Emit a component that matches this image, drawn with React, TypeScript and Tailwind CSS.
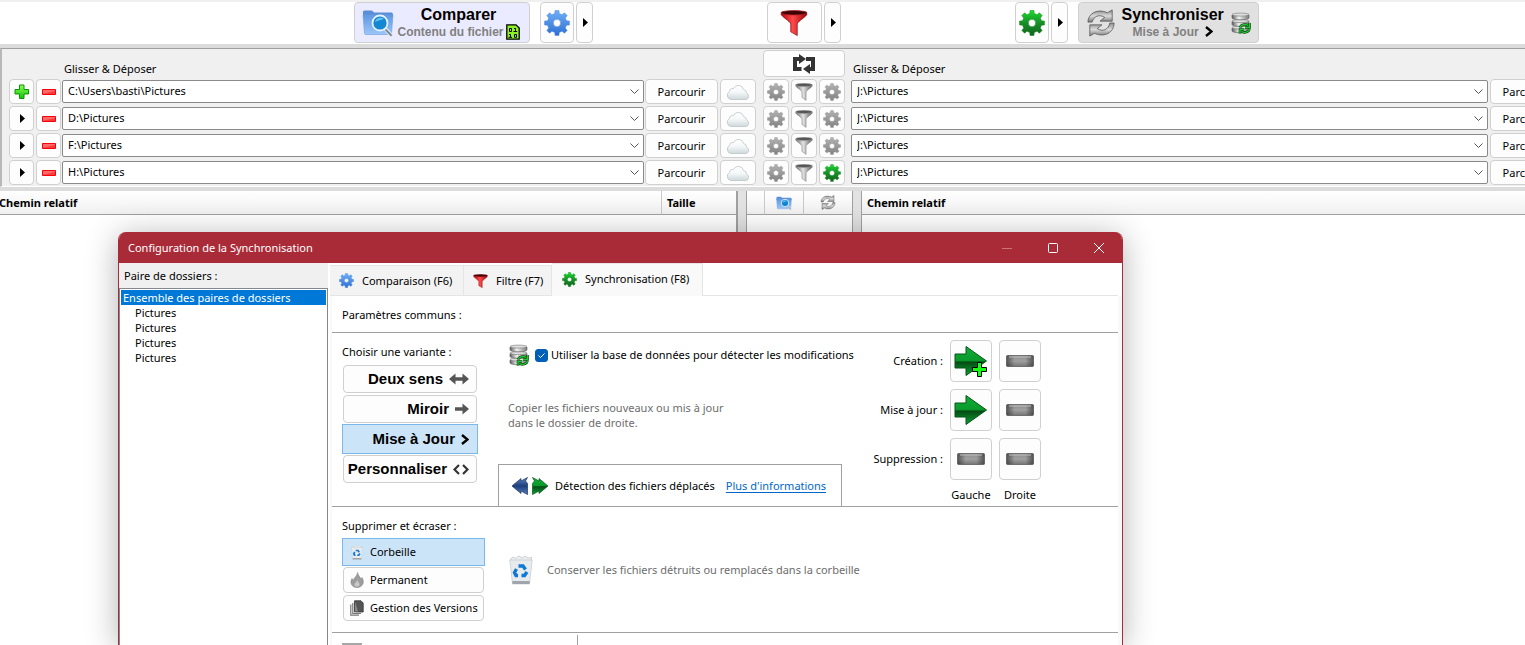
import type { ReactNode } from "react";

function gearPath(teeth: number, outer: number, inner: number, hole: number) {
  const step = (Math.PI * 2) / teeth;
  const at = (r: number, a: number) =>
    `${(16 + r * Math.sin(a)).toFixed(2)} ${(16 - r * Math.cos(a)).toFixed(2)}`;
  const points: string[] = [];
  for (let i = 0; i < teeth; i++) {
    const a = i * step;
    points.push(
      at(inner, a - step * 0.3),
      at(outer, a - step * 0.2),
      at(outer, a + step * 0.2),
      at(inner, a + step * 0.3),
    );
  }
  return `M${points.join("L")}Z M${16 - hole} 16a${hole} ${hole} 0 1 0 ${hole * 2} 0a${hole} ${hole} 0 1 0 ${-hole * 2} 0Z`;
}

const GEAR = gearPath(8, 15.5, 12, 4.5);

function Defs() {
  const v = { x1: "0", y1: "0", x2: "0", y2: "1" };
  const h = { x1: "0", y1: "0", x2: "1", y2: "0" };
  return (
    <svg className="absolute size-0" aria-hidden="true">
      <defs>
        <linearGradient id="blue" {...v}><stop offset="0" stopColor="#6fb0f8" /><stop offset="1" stopColor="#2e6fd2" /></linearGradient>
        <linearGradient id="green" {...v}><stop offset="0" stopColor="#18dd2c" /><stop offset=".5" stopColor="#178f26" /><stop offset="1" stopColor="#12641b" /></linearGradient>
        <linearGradient id="gray" {...v}><stop offset="0" stopColor="#b2b2b2" /><stop offset="1" stopColor="#828282" /></linearGradient>
        <linearGradient id="red" {...h}><stop offset="0" stopColor="#b80410" /><stop offset=".45" stopColor="#ff4a4a" /><stop offset="1" stopColor="#9c020a" /></linearGradient>
        <linearGradient id="steel" {...h}><stop offset="0" stopColor="#6e6e6e" /><stop offset=".45" stopColor="#e2e2e2" /><stop offset="1" stopColor="#5c5c5c" /></linearGradient>
        <linearGradient id="folder" {...v}><stop offset="0" stopColor="#5f98e4" /><stop offset="1" stopColor="#9cc6f8" /></linearGradient>
        <linearGradient id="cloud" {...v}><stop offset="0" stopColor="#ffffff" /><stop offset=".5" stopColor="#f4f7f8" /><stop offset="1" stopColor="#cfd8da" /></linearGradient>
        <linearGradient id="arrow" {...v}><stop offset="0" stopColor="#0fae35" /><stop offset=".48" stopColor="#0a9a2c" /><stop offset=".54" stopColor="#044d14" /><stop offset="1" stopColor="#0da233" /></linearGradient>
        <linearGradient id="navy" {...v}><stop offset="0" stopColor="#6188c4" /><stop offset=".5" stopColor="#1d3f7c" /><stop offset="1" stopColor="#5480c0" /></linearGradient>
        <linearGradient id="bar" {...v}><stop offset="0" stopColor="#8a8a8a" /><stop offset=".5" stopColor="#a0a0a0" /><stop offset="1" stopColor="#757575" /></linearGradient>
        <linearGradient id="barEdge" {...h}><stop offset="0" stopColor="#333" stopOpacity=".7" /><stop offset=".3" stopColor="#333" stopOpacity="0" /><stop offset=".7" stopColor="#333" stopOpacity="0" /><stop offset="1" stopColor="#333" stopOpacity=".7" /></linearGradient>
        <linearGradient id="drum" {...h}><stop offset="0" stopColor="#5a5a5a" /><stop offset=".4" stopColor="#f2f2f2" /><stop offset="1" stopColor="#7a7a7a" /></linearGradient>
        <linearGradient id="sync" {...v}><stop offset="0" stopColor="#8a8a8a" /><stop offset=".5" stopColor="#dadada" /><stop offset="1" stopColor="#7a7a7a" /></linearGradient>
        <linearGradient id="plus" {...v}><stop offset="0" stopColor="#8aff5a" /><stop offset="1" stopColor="#0fc400" /></linearGradient>
      </defs>
    </svg>
  );
}

type IconProps = { className: string };

const BlueGear = ({ className }: IconProps) => (
  <svg viewBox="0 0 32 32" className={`shrink-0 ${className}`} aria-hidden="true"><path d={GEAR} fill="url(#blue)" fillRule="evenodd" stroke="#4a86d6" strokeWidth="0.6" strokeLinejoin="round" /></svg>
);
const GreenGear = ({ className }: IconProps) => (
  <svg viewBox="0 0 32 32" className={`shrink-0 ${className}`} aria-hidden="true"><path d={GEAR} fill="url(#green)" fillRule="evenodd" stroke="#15801f" strokeWidth="0.6" strokeLinejoin="round" /></svg>
);
const GrayGear = ({ className }: IconProps) => (
  <svg viewBox="0 0 32 32" className={`shrink-0 ${className}`} aria-hidden="true"><path d={GEAR} fill="url(#gray)" fillRule="evenodd" stroke="#8a8a8a" strokeWidth="0.6" strokeLinejoin="round" /></svg>
);

const RedFunnel = ({ className }: IconProps) => (
  <svg viewBox="0 0 30 28" className={`shrink-0 ${className}`} aria-hidden="true">
    <path d="M1 4C1 7 11 12 11.500 15V23.500L18.500 27.500V15C19 12 29 7 29 4Z" fill="url(#red)" stroke="#7c0a10" strokeWidth=".7" />
    <ellipse cx="15" cy="3" rx="14" ry="2.300" fill="#3c0306" stroke="#a31a20" strokeWidth=".8" />
  </svg>
);
const GrayFunnel = ({ className }: IconProps) => (
  <svg viewBox="0 0 30 30" className={`shrink-0 ${className}`} aria-hidden="true">
    <path d="M1 4C1 7 11 12 11.500 15V24L18.500 29V15C19 12 29 7 29 4Z" fill="url(#steel)" stroke="#6a6a6a" strokeWidth=".7" />
    <ellipse cx="15" cy="3.200" rx="14" ry="2.600" fill="#555" stroke="#999" strokeWidth=".8" />
  </svg>
);

const FolderSearch = ({ className }: IconProps) => (
  <svg viewBox="0 0 32 28" className={`shrink-0 ${className}`} aria-hidden="true">
    <path d="M1 4V2.500L2 1.500H10L12 3.500H30L31 5V8H1Z" fill="#5a8fd8" />
    <path d="M1 6H31L29.500 24.500Q29.400 25.500 28 25.500H4Q2.600 25.500 2.500 24.500Z" fill="url(#folder)" stroke="#6a9ee4" strokeWidth=".6" />
    <path d="M22.500 19L29 26" stroke="#dfe6ee" strokeWidth="4" strokeLinecap="round" />
    <path d="M24 21L29 26.200" stroke="#73808f" strokeWidth="1.800" strokeLinecap="round" />
    <circle cx="18" cy="14" r="7.500" fill="#1387d3" stroke="#e6f1fb" strokeWidth="1.800" />
    <path d="M13 13A5.500 5.500 0 0 1 22 10Q18 11 13 13Z" fill="#62c1f2" />
  </svg>
);

const SyncArrows = ({ className }: IconProps) => (
  <svg viewBox="0 0 32 30" className={`shrink-0 ${className}`} aria-hidden="true">
    <path d="M2 14C2 5 12-1 23 4L28 1V13H15L20 9C14 5 8 8 6.500 14Z" fill="url(#sync)" stroke="#5c5c5c" strokeWidth=".9" strokeLinejoin="round" />
    <path d="M30 15C30 25 20 31 9 26L4 29V17H17L12 21C18 25 24 22 25.500 15Z" fill="url(#sync)" stroke="#5c5c5c" strokeWidth=".9" strokeLinejoin="round" />
  </svg>
);

const Database = ({ className }: IconProps) => (
  <svg viewBox="0 0 20 22" className={`shrink-0 ${className}`} aria-hidden="true">
    {[15, 8.500, 2].map((y) => (
      <g key={y}>
        <path d={`M1 ${y + 1}V${y + 4}A8.500 1.800 0 0 0 18 ${y + 4}V${y + 1}Z`} fill="url(#drum)" stroke="#6a6a6a" strokeWidth=".7" />
        <ellipse cx="9.500" cy={y + 0.6} rx="8.500" ry="1.500" fill="#dedede" stroke="#777" strokeWidth=".6" />
      </g>
    ))}
    <path d="M9 15.500A5 4 0 0 1 17 13.500M18.500 11V15.500H14M18.500 17A5 4 0 0 1 10.500 19.500M9 21.500V17.500H13" fill="none" stroke="#053c08" strokeWidth="2.600" />
    <path d="M9 15.500A5 4 0 0 1 17 13.500M18.500 11V15.500H14M18.500 17A5 4 0 0 1 10.500 19.500M9 21.500V17.500H13" fill="none" stroke="#25c737" strokeWidth="1.400" />
  </svg>
);

const Cloud = () => (
  <svg viewBox="0 0 24 16" className="h-4 w-6 shrink-0" aria-hidden="true">
    <path d="M5 15.500A4.300 4.300 0 0 1 3.500 7.500A3.500 3.500 0 0 1 7.500 4.500A5.300 5.300 0 0 1 17.500 5.500A3.500 3.500 0 0 1 20.500 9A3.400 3.400 0 0 1 20 15.500Z" fill="url(#cloud)" stroke="#bcc5c8" strokeWidth=".8" />
  </svg>
);

const Play = () => (
  <svg viewBox="-2 0 7 9" className="h-[9px] w-[7px] shrink-0" aria-hidden="true"><path d="M0 0L5 4.500L0 9Z" /></svg>
);
const Plus = () => (
  <svg viewBox="0 0 16 16" className="size-4 shrink-0" aria-hidden="true"><path d="M5.500 1H10V5.500H14.500V10H10V14.500H5.500V10H1V5.500H5.500Z" fill="url(#plus)" stroke="#0c9404" /></svg>
);
const Minus = () => (
  <svg viewBox="0 0 14 6" className="h-[6px] w-[14px] shrink-0" aria-hidden="true">
    <path d="M.5 .5H13.500V5.500H.5Z" fill="#ff6a6a" stroke="#f5000c" /><path d="M1 4.800L13 2V5H1Z" fill="#ff3a3a" />
  </svg>
);
const Chevron = () => (
  <svg viewBox="0 0 9 6" className="pointer-events-none absolute top-[9px] right-[5px] h-[6px] w-[9px]" fill="none" stroke="#555" aria-hidden="true"><path d="M.5 .5L4.500 4.500L8.500 .5" /></svg>
);
const Swap = () => (
  <svg viewBox="0 0 24 20" className="h-5 w-6 shrink-0" fill="none" stroke="#333" strokeWidth="4" aria-hidden="true">
    <path d="M9.500 15H3V5H8M14 5H21V15H16" />
    <path d="M7 0L14 5L7 10Z" fill="#333" stroke="none" /><path d="M18 10L11 15L18 20Z" fill="#333" stroke="none" />
  </svg>
);
const Binary = () => (
  <svg viewBox="0 0 14 16" className="h-4 w-[14px] shrink-0" aria-hidden="true">
    <path d="M.8 .8H10L13.200 4V15.200H.8Z" fill="#8cf02a" stroke="#000" strokeWidth="1.300" />
    <path d="M3.500 4.500H5.500V7.500H3.500ZM8 4.500H9.500V7.500M7.500 7.500H11.200M3 10.500H4.500V13.300M2.500 13.300H6M8.500 10.500H10.500V13.300H8.500Z" fill="none" stroke="#000" />
  </svg>
);
const Greater = () => (
  <svg viewBox="0 0 8 11" className="h-[11px] w-2 shrink-0" fill="none" stroke="#000" strokeWidth="2.400" aria-hidden="true"><path d="M1 1L6.500 5.500L1 10" /></svg>
);
const BothWays = () => (
  <svg viewBox="0 0 20 12" className="h-3 w-5 shrink-0" fill="#555" aria-hidden="true"><path d="M0 6L6.500 .5V4.200H13.500V.5L20 6L13.500 11.500V7.800H6.500V11.500Z" /></svg>
);
const OneWay = () => (
  <svg viewBox="0 0 14 12" className="h-3 w-[14px] shrink-0" fill="#555" aria-hidden="true"><path d="M0 4.200H7.500V.5L14 6L7.500 11.500V7.800H0Z" /></svg>
);
const Angles = () => (
  <svg viewBox="0 0 16 11" className="h-[11px] w-4 shrink-0" fill="none" stroke="#333" strokeWidth="2.200" aria-hidden="true"><path d="M6 1L1.500 5.500L6 10M10 1L14.500 5.500L10 10" /></svg>
);
const BigArrow = ({ plus }: { plus?: boolean }) => (
  <svg viewBox="0 0 34 32" className="h-8 w-[34px] shrink-0" aria-hidden="true">
    <path d="M1 9H12V1.500L32.500 16L12 30.500V23H1Z" fill="url(#arrow)" stroke="#06551a" strokeLinejoin="round" />
    {plus && <path d="M23.500 17.500H27.500V22.500H32.500V26.500H27.500V31.500H23.500V26.500H18.500V22.500H23.500Z" fill="#14ff14" stroke="#000" />}
  </svg>
);
const Bar = () => (
  <svg viewBox="0 0 28 12" className="h-3 w-7 shrink-0" aria-hidden="true">
    <rect x=".5" y=".5" width="27" height="11" rx="1" fill="url(#bar)" /><rect x=".5" y=".5" width="27" height="11" rx="1" fill="url(#barEdge)" stroke="#5c5c5c" strokeWidth=".8" />
    <path d="M3 2H25" stroke="#c0c0c0" />
  </svg>
);
const Moved = () => (
  <svg viewBox="0 0 36 18" className="h-[18px] w-9 shrink-0" aria-hidden="true">
    <path d="M0 9L9 1.500V4L15.500 .5L13.500 4L15.500 6.500V17.500L9 14V16.500Z" fill="url(#navy)" stroke="#1b3260" strokeWidth=".7" />
    <path d="M36 9L27 1.500V4L20.500 .5L22.500 4L20.500 6.500V17.500L27 14V16.500Z" fill="url(#arrow)" stroke="#06551a" strokeWidth=".7" />
  </svg>
);
const Bin = ({ className }: IconProps) => (
  <svg viewBox="0 0 24 30" className={`shrink-0 ${className}`} aria-hidden="true">
    <path d="M1.500 4L4 2L7 3.500L10 .8L13 3L16 1L19 3L22.500 2.500V6H1.500Z" fill="#eceff2" stroke="#b9bec4" strokeWidth=".7" />
    <path d="M.8 5H23.200L20.500 29H3.500Z" fill="#e8ebed" stroke="#c3c8cc" strokeWidth=".7" />
    <path d="M3.300 26H20.800L20.500 29H3.500Z" fill="#9fa5aa" />
    <path d="M9.500 11H14L16.500 14.500M18 17L15.500 20.500H12.500M9 20.500H7L5.500 17.500L7.500 14" fill="none" stroke="#0f78d4" strokeWidth="3.400" />
  </svg>
);
const Flame = () => (
  <svg viewBox="0 0 14 16" className="h-4 w-[14px] shrink-0" aria-hidden="true">
    <path d="M7.500 .5C8 3.500 10.500 5 10.500 7L12 5.500C15 10.500 12.500 15.500 7 15.500S-.5 10.500 2 6.500L3.500 8.500C3.800 5.500 7.500 4 7.500 .5Z" fill="#9d9d9d" stroke="#858585" strokeWidth=".6" />
    <path d="M7 8C8 10 10 11 9.500 13S5 15 4.500 13S7 10.500 7 8Z" fill="#c9c9c9" />
  </svg>
);
const Versions = () => (
  <svg viewBox="0 0 14 16" className="h-4 w-[14px] shrink-0" aria-hidden="true">
    <path d="M.8 4.500V15.200H9M2.800 3V13.500H11" fill="none" stroke="#777" strokeWidth="1.200" />
    <path d="M4.500 .8H11L13.200 3V12H4.500Z" fill="#555" stroke="#333" strokeWidth=".8" /><path d="M5 1.500L8 11.500H5Z" fill="#888" />
  </svg>
);

const BTN = "flex items-center justify-center rounded-[4px] border border-[#d0d0d0] bg-[#fdfdfd]";

function IconButton({ label, className, children }: { label: string; className: string; children: ReactNode }) {
  return (
    <button type="button" aria-label={label} className={`${BTN} shrink-0 ${className}`}>
      {children}
    </button>
  );
}

function Toolbar() {
  return (
    <header className="flex justify-center gap-[174px] border-t-2 border-[#f0f0f0] bg-white pb-px pl-[87px]">
      <div className="flex">
        <button type="button" className="flex h-[41px] w-[176px] items-center rounded-[4px] border border-[#d0d0d0] bg-[#ebebff] pl-[7px] font-['Liberation_Sans',sans-serif] font-bold">
          <FolderSearch className="h-7 w-8" />
          <span className="ml-1 flex flex-col items-center">
            <span className="text-[16px] leading-[18px] text-black">Comparer</span>
            <span className="flex items-end gap-[2px] text-[12px] leading-4 whitespace-nowrap text-[#808080]">Contenu du fichier <Binary /></span>
          </span>
        </button>
        <IconButton label="Paramètres de comparaison" className="ml-[10px] h-[41px] w-[34px]"><BlueGear className="size-[26px]" /></IconButton>
        <IconButton label="Menu de comparaison" className="ml-[2px] h-[41px] w-[17px]"><Play /></IconButton>
      </div>
      <div className="flex gap-[2px]">
        <IconButton label="Filtre" className="h-[41px] w-[55px]"><RedFunnel className="h-7 w-[28px]" /></IconButton>
        <IconButton label="Menu du filtre" className="h-[41px] w-[17px]"><Play /></IconButton>
      </div>
      <div className="flex">
        <IconButton label="Paramètres de synchronisation" className="h-[41px] w-[34px]"><GreenGear className="size-[26px]" /></IconButton>
        <IconButton label="Menu de synchronisation" className="ml-[2px] h-[41px] w-[17px]"><Play /></IconButton>
        <button type="button" className="ml-[10px] flex h-[41px] w-[181px] items-center rounded-[4px] border border-[#d0d0d0] bg-[#e1e1e1] pl-[7px] font-['Liberation_Sans',sans-serif] font-bold">
          <SyncArrows className="h-7 w-[30px]" />
          <span className="ml-[6px] flex flex-col items-center">
            <span className="text-[16px] leading-[18px] text-black">Synchroniser</span>
            <span className="flex items-center gap-[6px] text-[12px] leading-4 text-[#808080]">Mise à Jour <Greater /></span>
          </span>
          <Database className="ml-[7px] h-[22px] w-5" />
        </button>
      </div>
    </header>
  );
}

const PAIRS = [
  { left: "C:\\Users\\basti\\Pictures", right: "J:\\Pictures", first: true, local: false },
  { left: "D:\\Pictures", right: "J:\\Pictures", first: false, local: false },
  { left: "F:\\Pictures", right: "J:\\Pictures", first: false, local: false },
  { left: "H:\\Pictures", right: "J:\\Pictures", first: false, local: true },
];

function PathBox({ value, label }: { value: string; label: string }) {
  return (
    <div className="relative min-w-0 flex-1">
      <select aria-label={label} className="block h-[23px] w-full appearance-none rounded-[2px] border border-[#8a8a8a] bg-white pb-[2px] pl-[5px] text-black">
        <option>{value}</option>
      </select>
      <Chevron />
    </div>
  );
}

function FolderPairs() {
  return (
    <section className="flex border-y-4 border-[#dcdcdc] bg-[#f0f0f0]">
      <div className="flex min-w-0 flex-1 border-t border-b border-l-2 border-t-[#a0a0a0] border-b-white border-l-[#b8b8b8]">
        <div className="w-[754px] shrink-0 pt-[10px] pl-[7px]">
          <p className="h-5 pl-[55px] leading-5">Glisser &amp; Déposer</p>
          <div className="flex flex-col gap-[2px]">
            {PAIRS.map((p) => (
              <div key={p.left} className="flex items-center">
                <IconButton label={p.first ? "Ajouter" : "Options"} className="h-[25px] w-[25px]">{p.first ? <Plus /> : <Play />}</IconButton>
                <IconButton label="Supprimer" className="mr-px ml-[2px] h-[25px] w-[25px]"><Minus /></IconButton>
                <PathBox value={p.left} label="Dossier de gauche" />
                <button type="button" className={`${BTN} ml-px h-[25px] w-[73px] shrink-0`}>Parcourir</button>
                <IconButton label="Stockage en ligne" className="ml-[2px] h-[25px] w-9"><Cloud /></IconButton>
              </div>
            ))}
          </div>
        </div>
        <div className="flex w-[95px] shrink-0 flex-col items-center pt-px">
          <IconButton label="Échanger" className="mb-[2px] h-[27px] w-[82px]"><Swap /></IconButton>
          <div className="flex flex-col gap-[2px]">
            {PAIRS.map((p) => (
              <div key={p.left} className="flex gap-[2px]">
                <IconButton label="Comparaison locale" className="h-[25px] w-[26px]"><GrayGear className="size-[18px]" /></IconButton>
                <IconButton label="Filtre local" className="h-[25px] w-[26px]"><GrayFunnel className="size-[18px]" /></IconButton>
                <IconButton label="Synchronisation locale" className="h-[25px] w-[26px]">
                  {p.local ? <GreenGear className="size-[18px]" /> : <GrayGear className="size-[18px]" />}
                </IconButton>
              </div>
            ))}
          </div>
        </div>
        <div className="min-w-0 flex-1 overflow-hidden pt-[10px] pb-px">
          <p className="h-5 pl-[2px] leading-5">Glisser &amp; Déposer</p>
          <div className="flex flex-col gap-[2px]">
            {PAIRS.map((p) => (
              <div key={p.left} className="flex items-center">
                <PathBox value={p.right} label="Dossier de droite" />
                <button type="button" className={`${BTN} -mr-[38px] ml-[2px] h-[25px] w-[73px] shrink-0`}>Parcourir</button>
              </div>
            ))}
          </div>
        </div>
      </div>
    </section>
  );
}

const HEAD = "h-[24px] border-b border-[#a0a0a0] bg-linear-to-b from-white to-[#f0f0f0] p-0 text-left font-bold";

function Overview() {
  return (
    <main className="flex flex-1 bg-[#e2e2e2]">
      <div className="w-[738px] border-r-2 border-[#a0a0a0] bg-white">
        <table className="w-full table-fixed border-separate border-spacing-0">
          <thead>
            <tr>
              <th className={HEAD}><span className="-ml-px block">Chemin relatif</span></th>
              <th className={`${HEAD} w-[75px] border-l border-l-[#c8c8c8] pl-[5px]`}>Taille</th>
            </tr>
          </thead>
        </table>
      </div>
      <div className="ml-2 w-[107px] border-x border-[#a0a0a0] bg-white">
        <table className="w-full table-fixed border-separate border-spacing-0">
          <thead>
            <tr>
              <th className={`${HEAD} w-[17px]`} aria-label="Sélection" />
              <th className={`${HEAD} w-[39px] border-l border-l-[#c8c8c8]`} aria-label="Catégorie"><FolderSearch className="mx-auto h-[14px] w-4" /></th>
              <th className={`${HEAD} border-l border-l-[#c8c8c8]`} aria-label="Action"><SyncArrows className="mx-auto h-[15px] w-4" /></th>
            </tr>
          </thead>
        </table>
      </div>
      <div className="ml-2 flex-1 border-l border-[#a0a0a0] bg-white">
        <table className="w-full border-separate border-spacing-0">
          <thead>
            <tr><th className={`${HEAD} pl-[5px]`}>Chemin relatif</th></tr>
          </thead>
        </table>
      </div>
    </main>
  );
}

const PLAIN = "rounded-[4px] border-[#d0d0d0] bg-[#fdfdfd] mx-px";
const CHOSEN = "-my-px border-[#7ab8ec] bg-[#cce4f7]";

function Variants() {
  const items = [
    { name: "Deux sens", icon: <BothWays />, on: false },
    { name: "Miroir", icon: <OneWay />, on: false },
    { name: "Mise à Jour", icon: <Greater />, on: true },
    { name: "Personnaliser", icon: <Angles />, on: false },
  ];
  return (
    <div className="flex w-[136px] shrink-0 flex-col pt-[11px]">
      <p className="mb-[5px] leading-4">Choisir une variante :</p>
      <div className="flex flex-col gap-[2px]">
        {items.map((v) => (
          <button
            key={v.name}
            type="button"
            aria-pressed={v.on}
            className={`flex items-center justify-end border font-['Liberation_Sans',sans-serif] text-[15px] font-bold whitespace-nowrap ${v.on ? `${CHOSEN} h-[30px] gap-[6px] pr-2` : `${PLAIN} h-[28px] gap-[6px] pr-[7px]`}`}
          >
            {v.name}
            {v.icon}
          </button>
        ))}
      </div>
    </div>
  );
}

function DirectionGrid() {
  const rows = [
    { name: "Création :", left: <BigArrow plus /> },
    { name: "Mise à jour :", left: <BigArrow /> },
    { name: "Suppression :", left: <Bar /> },
  ];
  return (
    <div className="ml-6 grid grid-cols-[77px_42px_42px] content-start items-center gap-x-[7px] gap-y-[7px] pt-[7px]">
      {rows.map((r) => (
        <div key={r.name} className="contents">
          <span className="text-right whitespace-nowrap">{r.name}</span>
          <IconButton label={`${r.name} gauche`} className="size-[42px]">{r.left}</IconButton>
          <IconButton label={`${r.name} droite`} className="size-[42px]"><Bar /></IconButton>
        </div>
      ))}
      <span />
      <span className="-mx-2 text-center leading-4">Gauche</span>
      <span className="-mx-2 text-center leading-4">Droite</span>
    </div>
  );
}

function Deletion() {
  const items = [
    { name: "Corbeille", icon: <Bin className="h-[15px] w-[14px]" />, on: true },
    { name: "Permanent", icon: <Flame />, on: false },
    { name: "Gestion des Versions", icon: <Versions />, on: false },
  ];
  return (
    <section className="flex border-b border-[#a0a0a0] pt-[11px] pb-[11px] pl-[10px]">
      <div className="w-[143px] shrink-0">
        <p className="mb-[5px] leading-4">Supprimer et écraser :</p>
        <div className="flex flex-col gap-[2px]">
          {items.map((d) => (
            <button
              key={d.name}
              type="button"
              aria-pressed={d.on}
              className={`flex items-center gap-[6px] border whitespace-nowrap ${d.on ? `${CHOSEN} h-[28px] pl-[7px]` : `${PLAIN} h-[26px] pl-[6px]`}`}
            >
              {d.icon}
              {d.name}
            </button>
          ))}
        </div>
      </div>
      <div className="flex items-center gap-[14px] pl-6 text-[#6d6d6d]">
        <Bin className="h-[30px] w-6" />
        <p>Conserver les fichiers détruits ou remplacés dans la corbeille</p>
      </div>
    </section>
  );
}

const TAB = "flex h-[31px] items-center gap-2 border border-l-0 border-[#e5e5e5] bg-[#f3f3f3] pl-[9px] text-left whitespace-nowrap";

function Dialog() {
  return (
    <div
      role="dialog"
      aria-labelledby="dialog-title"
      className="absolute top-[232px] bottom-0 left-[118px] flex w-[1005px] flex-col overflow-hidden rounded-t-lg border-x border-[#aa2b38] bg-[#f0f0f0]"
    >
      <div className="flex h-[31px] shrink-0 items-center bg-[#aa2b38] pl-[9px] text-white">
        <h1 id="dialog-title" className="flex-1">Configuration de la Synchronisation</h1>
        <button type="button" aria-label="Réduire" className="flex h-full w-[46px] items-center justify-center text-[#c9737c]">
          <svg viewBox="0 0 10 10" className="size-[10px]" stroke="currentColor" aria-hidden="true"><path d="M0 5.500H10" /></svg>
        </button>
        <button type="button" aria-label="Agrandir" className="flex h-full w-[46px] items-center justify-center">
          <svg viewBox="0 0 10 10" className="size-[10px]" fill="none" stroke="currentColor" aria-hidden="true"><rect x=".5" y=".5" width="9" height="9" rx="1" /></svg>
        </button>
        <button type="button" aria-label="Fermer" className="flex h-full w-[46px] items-center justify-center">
          <svg viewBox="0 0 10 10" className="size-[10px]" stroke="currentColor" aria-hidden="true"><path d="M0 0L10 10M10 0L0 10" /></svg>
        </button>
      </div>
      <div className="flex min-h-0 flex-1">
        <div className="flex w-[209px] shrink-0 flex-col">
          <p className="h-[25px] pl-[5px] leading-[26px]">Paire de dossiers :</p>
          <ul role="listbox" aria-label="Paire de dossiers" className="flex-1 border border-b-0 border-[#828790] bg-white p-px leading-[15px]">
            <li role="option" aria-selected="true" className="bg-[#0078d7] pl-[2px] text-white">Ensemble des paires de dossiers</li>
            {PAIRS.map((p) => (
              <li key={p.left} role="option" aria-selected="false" className="pl-[14px]">Pictures</li>
            ))}
          </ul>
        </div>
        <div className="flex min-w-0 flex-1 flex-col bg-white pl-[2px]">
          <div role="tablist" className="flex h-[33px] shrink-0 items-end pr-1">
            <button type="button" role="tab" aria-selected="false" className={`${TAB} w-[134px]`}><BlueGear className="size-[15px]" />Comparaison (F6)</button>
            <button type="button" role="tab" aria-selected="false" className={`${TAB} w-[88px]`}><RedFunnel className="h-[14px] w-[15px]" />Filtre (F7)</button>
            <button type="button" role="tab" aria-selected="true" className="flex h-[33px] w-[151px] items-center gap-2 border-t border-r border-[#e5e5e5] bg-[#f9f9f9] pb-[2px] pl-[10px] whitespace-nowrap"><GreenGear className="size-[15px]" />Synchronisation (F8)</button>
            <div className="h-px flex-1 bg-[#e5e5e5]" />
          </div>
          <div className="flex-1 border-r-4 border-l-2 border-[#f9f9f9] bg-white">
            <h2 className="h-[37px] border-b border-[#a0a0a0] pl-[10px] leading-[38px]">Paramètres communs :</h2>
            <section className="flex h-[174px] border-b border-[#a0a0a0] pl-[10px]">
              <Variants />
              <div className="ml-5 flex w-[344px] shrink-0 flex-col">
                <label className="mt-[11px] flex items-center pl-[11px] whitespace-nowrap">
                  <Database className="h-[22px] w-5" />
                  <span className="relative mr-[3px] ml-[6px] size-[13px] shrink-0">
                    <input type="checkbox" defaultChecked className="peer block size-[13px] appearance-none rounded-[3px] border border-[#005fb8] checked:bg-[#005fb8]" />
                    <svg viewBox="0 0 13 13" className="pointer-events-none invisible absolute inset-0 size-[13px] peer-checked:visible" fill="none" stroke="#fff" aria-hidden="true"><path d="M3.500 6.500L5.500 8.500L9.500 4.500" /></svg>
                  </span>
                  Utiliser la base de données pour détecter les modifications
                </label>
                <p className="mt-[34px] pl-[10px] leading-[15px] text-[#6d6d6d]">Copier les fichiers nouveaux ou mis à jour<br />dans le dossier de droite.</p>
                <div className="mt-auto flex h-[42px] items-center border border-b-0 border-[#a0a0a0] pl-[13px] whitespace-nowrap">
                  <Moved />
                  <span className="ml-[7px]">Détection des fichiers déplacés</span>
                  <a href="#informations" className="ml-[11px] text-[#0066cc] underline underline-offset-2">Plus d'informations</a>
                </div>
              </div>
              <DirectionGrid />
            </section>
            <Deletion />
            <div className="flex pt-[2px]">
              <div className="flex h-[10px] w-[246px] items-end border-r border-[#a0a0a0] pl-[10px]"><span className="h-[2px] w-5 bg-[#a8a8a8]" /></div>
            </div>
          </div>
        </div>
      </div>
    </div>
  );
}

export default function App() {
  return (
    <div className="relative flex min-h-screen flex-col overflow-hidden bg-white font-['Noto_Sans','Open_Sans',sans-serif] text-[11px] leading-4 text-black">
      <Defs />
      <Toolbar />
      <FolderPairs />
      <Overview />
      <div className="pointer-events-none absolute top-[232px] bottom-0 left-[118px] w-[1005px] rounded-t-lg shadow-[0_4px_32px_rgba(0,0,0,0.3)]" />
      <Dialog />
    </div>
  );
}
